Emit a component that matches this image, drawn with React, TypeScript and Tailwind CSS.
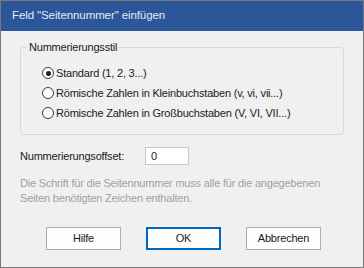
const Radio = ({ checked, label }: { checked?: boolean; label: string }) => (
  <div className="flex items-center h-5">
    <span className="w-[12px] h-[12px] rounded-full border border-[#3c3c3c] bg-white flex items-center justify-center">
      {checked && <span className="w-[5px] h-[5px] rounded-full bg-[#222]" />}
    </span>
    <span className="ml-[2px]">{label}</span>
  </div>
);

const App = () => {
  return (
    <div
      className="w-[364px] h-[268px] border border-[#7a7a7a] bg-[#f0f0f0] flex flex-col text-[11px] tracking-[-0.2px] text-[#1a1a1a]"
      style={{ fontFamily: '"Liberation Sans", Arial, sans-serif' }}
    >
      <div className="h-[30px] bg-[#2b579a] text-[#e8e8f0] flex items-center pl-[11px] pb-[1px] text-[11.5px] tracking-[-0.1px]">
        Feld "Seitennummer" einfügen
      </div>

      <div className="px-[19px] pt-[16px] flex flex-col">
        <div className="relative border border-[#d9d9d9] rounded-[3px] h-[88px] pl-[21px] pt-[15px]">
          <span className="absolute -top-[9px] left-[6px] px-[2px] bg-[#f0f0f0]">Nummerierungsstil</span>
          <Radio checked label="Standard (1, 2, 3...)" />
          <Radio label="Römische Zahlen in Kleinbuchstaben (v, vi, vii...)" />
          <Radio label="Römische Zahlen in Großbuchstaben (V, VI, VII...)" />
        </div>

        <div className="flex items-center mt-[12px]">
          <span className="w-[125px]">Nummerierungsoffset:</span>
          <div className="w-[44px] h-[18px] border border-[#c8c8c8] bg-white flex items-center pl-[5px]">0</div>
        </div>

        <p className="mt-[11px] text-[#a0a0a0] leading-[15px] pr-[20px]">
          Die Schrift für die Seitennummer muss alle für die angegebenen Seiten benötigten Zeichen enthalten.
        </p>

        <div className="flex gap-[25px] mt-[21px] pl-[26px]">
          <button className="w-[75px] h-[23px] border border-[#adadad] bg-[#fdfdfd]">Hilfe</button>
          <button className="w-[75px] h-[23px] border-2 border-[#0067c0] bg-[#fdfdfd]">OK</button>
          <button className="w-[75px] h-[23px] border border-[#adadad] bg-[#fdfdfd]">Abbrechen</button>
        </div>
      </div>
    </div>
  );
};

export default App;
